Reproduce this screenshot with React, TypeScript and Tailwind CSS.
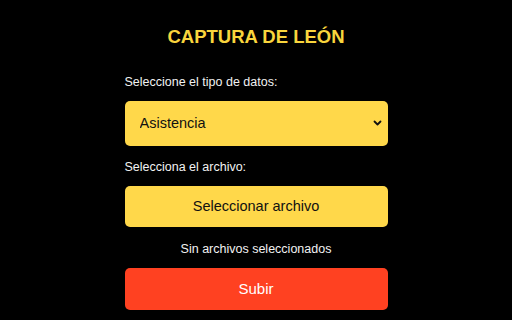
import { useState } from "react";

export default function App() {
  const [tipo, setTipo] = useState("asistencia");

  return (
    <div className="h-[320px] w-full bg-black font-['Liberation_Sans',Arial,sans-serif] overflow-hidden">
      <div className="mx-auto flex w-[263px] flex-col pt-[25px]">
        <h1 className="text-center text-[18.5px] font-bold leading-[24px] text-[#f9d53d]">
          CAPTURA DE LEÓN
        </h1>

        <label className="mt-[25px] text-[12.5px] leading-[16px] text-[#f2f2f2]">
          Seleccione el tipo de datos:
        </label>
        <div className="relative mt-[11px]">
          <select
            value={tipo}
            onChange={(e) => setTipo(e.target.value)}
            className="h-[45px] w-full appearance-none rounded-[5px] bg-[#ffd84a] pl-[15px] text-[14.5px] text-[#111] outline-none"
          >
            <option value="asistencia">Asistencia</option>
            <option value="calificaciones">Calificaciones</option>
          </select>
          <svg
            className="pointer-events-none absolute right-[6px] top-[18px]"
            width="9"
            height="8"
            viewBox="0 0 9 8"
          >
            <path d="M1.5 2.5 L4.5 5.5 L7.5 2.5" stroke="#111" strokeWidth="1.8" fill="none" strokeLinecap="round" strokeLinejoin="round" />
          </svg>
        </div>

        <label className="mt-[13px] text-[12.5px] leading-[16px] text-[#f2f2f2]">
          Selecciona el archivo:
        </label>
        <button className="mt-[11px] h-[41px] w-full rounded-[5px] bg-[#ffd84a] text-[14.5px] text-[#111]">
          Seleccionar archivo
        </button>
        <p className="mt-[14px] text-center text-[12.5px] leading-[16px] text-[#f2f2f2]">
          Sin archivos seleccionados
        </p>
        <button className="mt-[11px] h-[42px] w-full rounded-[5px] bg-[#ff4121] text-[15px] text-white">
          Subir
        </button>
      </div>
    </div>
  );
}
